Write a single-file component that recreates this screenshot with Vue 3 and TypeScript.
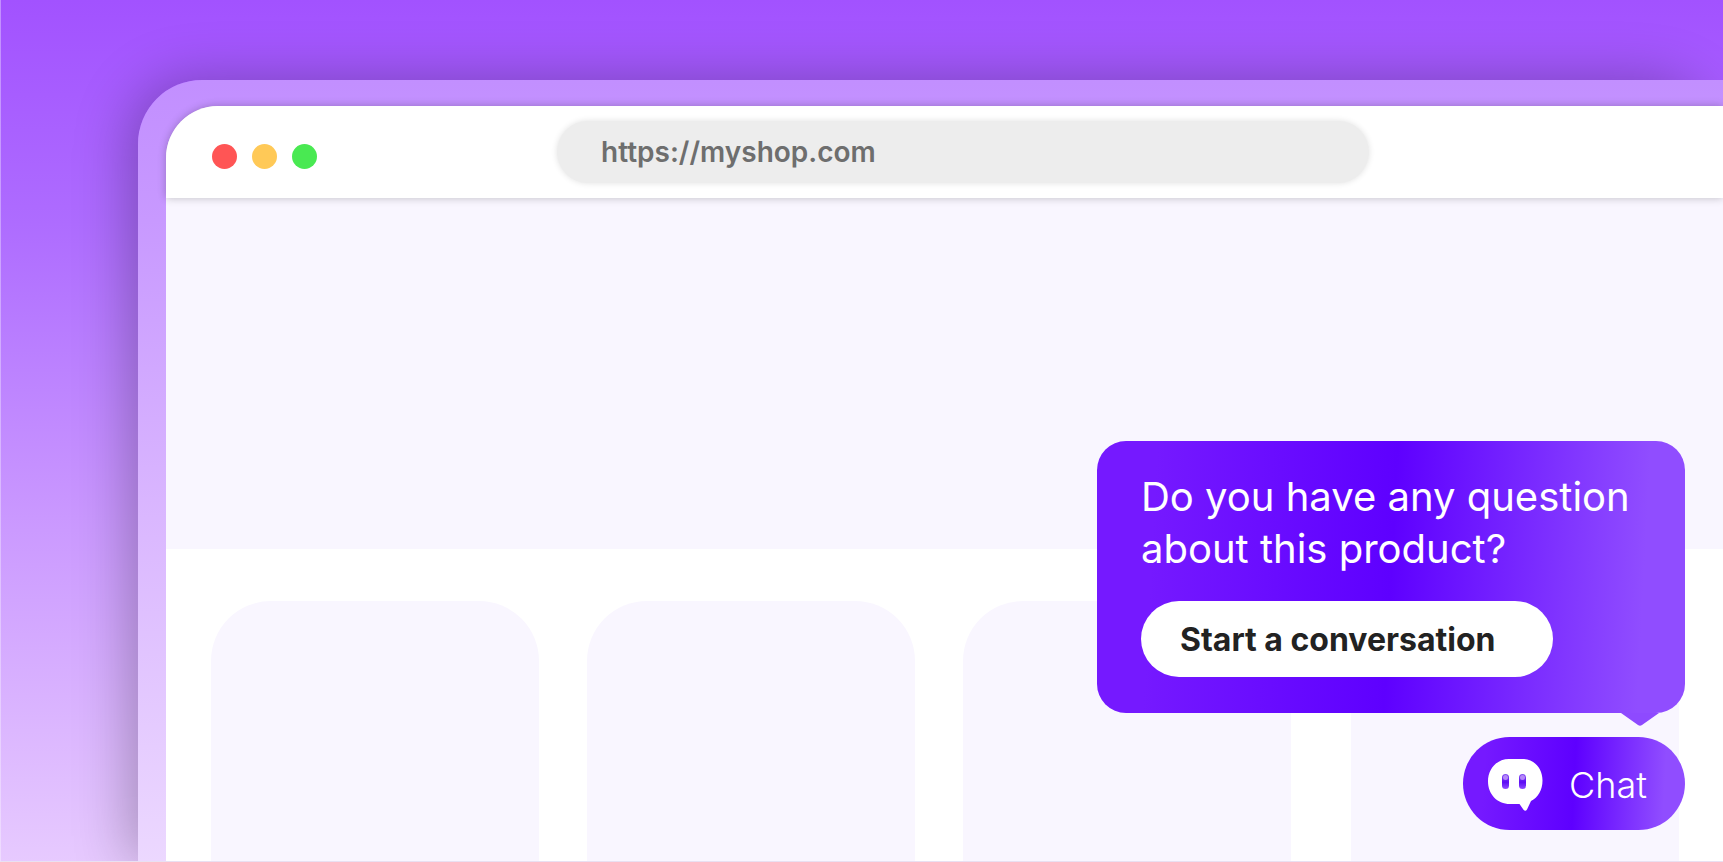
<script setup lang="ts">
import { ref } from 'vue'

const address = ref<string>('https://myshop.com')
const controls: string[] = ['close', 'minimise', 'expand']
const products: number[] = [1, 2, 3, 4]
const eyes: number[] = [14, 31]
</script>

<template>
  <main class="scene">
    <div class="frame">
      <section class="window">
        <header class="toolbar">
          <div class="controls">
            <span v-for="name in controls" :key="name" class="dot" :class="name"></span>
          </div>
          <input v-model="address" class="address" type="text" aria-label="Address" spellcheck="false" />
        </header>
        <div class="hero"></div>
        <div class="products">
          <article v-for="item in products" :key="item" class="product"></article>
        </div>
      </section>
    </div>

    <aside class="widget">
      <div class="prompt">
        <p class="question">Do you have any question<br />about this product?</p>
        <button class="start" type="button">Start a conversation</button>
        <svg class="tail" viewBox="0 0 38 13" aria-hidden="true">
          <path d="M0 0H38L21 12Q19 13.600 17 12Z" fill="#8e4aff" />
        </svg>
      </div>
      <button class="chat" type="button">
        <svg class="bubble" viewBox="0 0 55 52" aria-hidden="true">
          <defs>
            <linearGradient id="eye" x1="0" y1="0" x2="0" y2="1">
              <stop offset="0" stop-color="#8650f2" />
              <stop offset="0.55" stop-color="#5d0cf5" />
              <stop offset="1" stop-color="#904dff" />
            </linearGradient>
          </defs>
          <path
            d="M21 0H34C46 0 54.500 9 54.500 21.500C54.500 31 50 38.500 43 42L39 50.500Q37.500 53 35.500 50.800L31.500 45H22C9 45 0 35 0 22.500C0 9.500 9 0 21 0Z"
            fill="#fff"
          />
          <g v-for="x in eyes" :key="x">
            <rect :x="x" y="15" width="7" height="15" rx="3.500" fill="url(#eye)" />
            <circle :cx="x + 3.5" cy="18.500" r="2.500" fill="#b488f8" />
          </g>
        </svg>
        <span>Chat</span>
      </button>
    </aside>
  </main>
</template>

<style>
body {
  margin: 0;
}
</style>

<style scoped>
.scene {
  position: relative;
  isolation: isolate;
  display: flex;
  box-sizing: border-box;
  min-height: 100vh;
  padding: 80px 0 0 138px;
  overflow: hidden;
  background: linear-gradient(180deg, #a252ff 0%, #ae6cff 26%, #ca98ff 60%, #e7caff 100%);
  font-family: Inter, "Liberation Sans", sans-serif;
}

.scene::before {
  content: "";
  position: absolute;
  inset: 0;
  z-index: 3;
  border-bottom: 1px solid #e9e0f2;
  border-left: 1px solid rgba(255, 255, 255, 0.35);
  pointer-events: none;
}

.frame {
  position: relative;
  display: flex;
  flex: 1;
  box-sizing: border-box;
  padding: 26px 0 0 28px;
  border-radius: 64px 0 0 0;
  background: linear-gradient(#c28fff 0%, #c899ff 18%, #dab7ff 56%, #ecd8ff 100%);
}

.frame::before {
  content: "";
  position: absolute;
  inset: 0 4px 0 0;
  z-index: -1;
  border-radius: 64px 64px 0 0;
  box-shadow: -8px 0 56px rgba(0, 0, 0, 0.28);
}

.window {
  display: flex;
  flex: 1;
  flex-direction: column;
  border-radius: 52px 0 0 0;
  background: #fff;
}

.toolbar {
  position: relative;
  z-index: 1;
  display: grid;
  grid-template-columns: 105px 240fr 812fr 354fr;
  align-items: center;
  height: 92px;
  padding-left: 46px;
  border-radius: 52px 0 0 0;
  background: #fff;
  box-shadow: 0 0 8px rgba(0, 0, 0, 0.24);
}

.controls {
  display: flex;
  gap: 15px;
  padding-top: 9px;
}

.dot {
  width: 25px;
  height: 25px;
  border-radius: 50%;
}

.close {
  background: #ff5555;
}

.minimise {
  background: #ffc957;
}

.expand {
  background: #49e952;
}

.address {
  grid-column: 3;
  box-sizing: border-box;
  width: 100%;
  height: 62px;
  padding: 0 44px;
  border: 0;
  border-radius: 31px;
  outline: 0;
  background: #ededed;
  box-shadow: 0 0 6px rgba(0, 0, 0, 0.12);
  color: #6e6e6e;
  font: 600 28px Inter, "Liberation Sans", sans-serif;
}

.hero {
  height: 351px;
  background: #f9f6ff;
}

.products {
  display: flex;
  flex: 1;
  gap: 48px;
  padding: 52px 44px 0 45px;
}

.product {
  flex: 1;
  min-height: 240px;
  border-radius: 60px 60px 0 0;
  background: #f9f6ff;
}

.product:last-child {
  margin-left: 12px;
}

.widget {
  position: absolute;
  right: 38px;
  bottom: 32px;
  z-index: 2;
  display: flex;
  flex-direction: column;
  align-items: flex-end;
  gap: 24px;
}

.prompt {
  position: relative;
  box-sizing: border-box;
  width: 588px;
  padding: 30px 44px 36px;
  border-radius: 29px;
  background: linear-gradient(93deg, #7519ff 10%, #5e00ff 50%, #904dff 92%);
}

.question {
  margin: 0 0 26px;
  color: #fff;
  font-size: 40px;
  line-height: 52px;
  white-space: nowrap;
}

.start {
  display: block;
  width: 412px;
  height: 76px;
  padding: 0 39px;
  border: 0;
  border-radius: 38px;
  background: #fff;
  color: #222;
  font: 700 32px Inter, "Liberation Sans", sans-serif;
  text-align: left;
  white-space: nowrap;
}

.tail {
  position: absolute;
  top: 100%;
  right: 26px;
  width: 38px;
  height: 13px;
}

.chat {
  display: flex;
  align-items: center;
  box-sizing: border-box;
  height: 93px;
  padding: 3px 38px 0 25px;
  border: 0;
  border-radius: 47px;
  background: linear-gradient(93deg, #7519ff 10%, #5e00ff 50%, #904dff 90%);
  color: #fff;
  font: 300 36px Inter, "Liberation Sans", sans-serif;
  gap: 26px;
}

.bubble {
  width: 55px;
  height: 52px;
}
</style>
